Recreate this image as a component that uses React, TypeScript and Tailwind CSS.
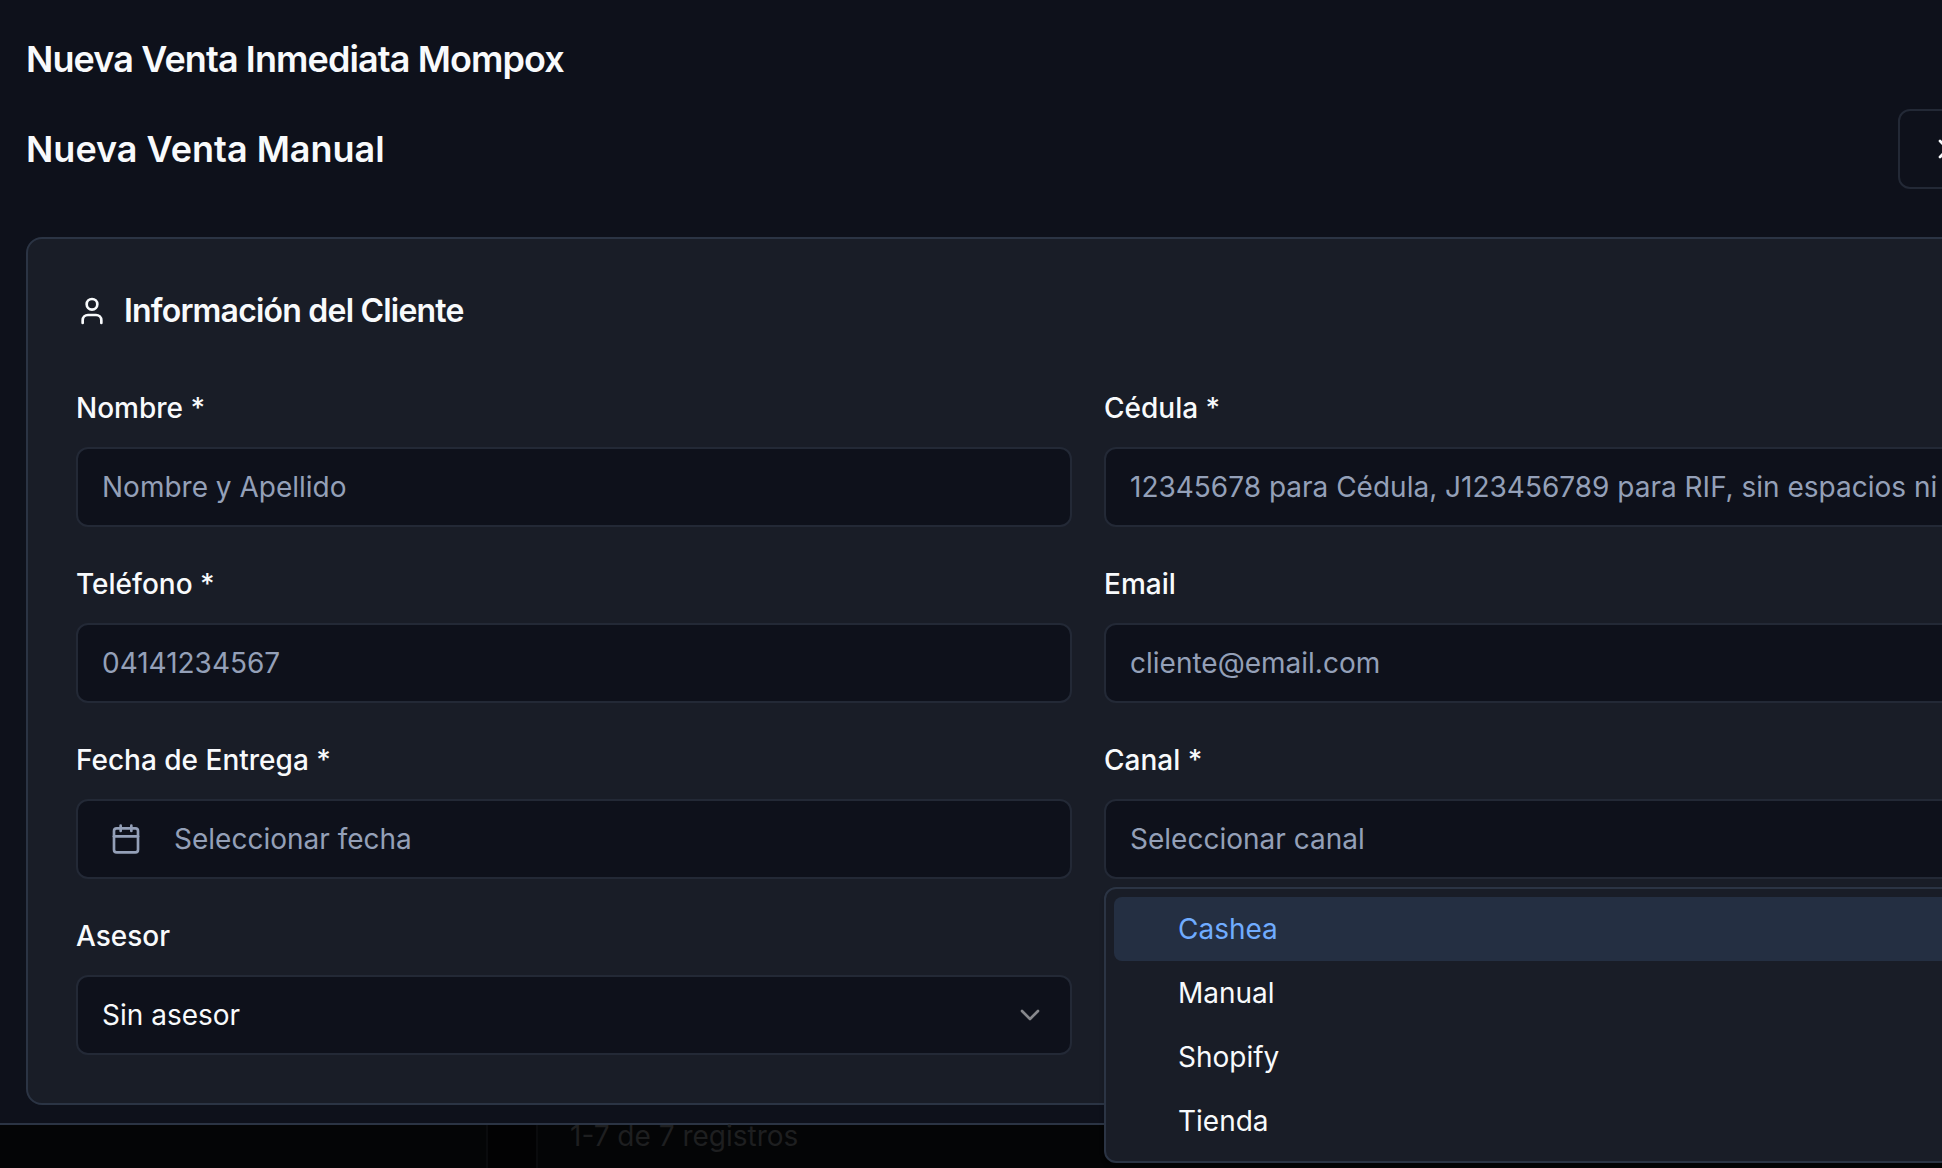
import type { ReactNode } from "react";
import { Calendar, ChevronDown, User, X } from "lucide-react";

const control =
  "h-20 w-full rounded-xl border-2 border-[#232936] bg-[#0e111b] px-6 text-[28px] outline-none placeholder:text-[#94a0b8] placeholder:opacity-100";

const channels = ["Cashea", "Manual", "Shopify", "Tienda"];

function Field({ id, label, children }: { id: string; label: string; children: ReactNode }) {
  return (
    <div className="min-w-0">
      <label htmlFor={id} className="mb-3.5 block text-[28px] leading-[50px] font-medium">
        {label}
      </label>
      {children}
    </div>
  );
}

function ChannelMenu() {
  return (
    <ul
      role="listbox"
      aria-label="Canal"
      className="absolute inset-x-0 top-full z-10 mt-2 rounded-xl border-2 border-[#2b3444] bg-[#191d27] p-2 shadow-md"
    >
      {channels.map((name, i) => (
        <li
          key={name}
          role="option"
          aria-selected={i === 0}
          className={
            i === 0
              ? "rounded-lg bg-[#242f42] pl-16 text-[28px] leading-[64px] text-[#70acff]"
              : "rounded-lg pl-16 text-[28px] leading-[64px]"
          }
        >
          {name}
        </li>
      ))}
    </ul>
  );
}

export default function App() {
  return (
    <div className="flex h-screen flex-col overflow-hidden bg-[#020203] font-['Inter',sans-serif] text-[#f8fafc]">
      <main className="border-b-2 border-[#2b3444] bg-[#0e111b] pt-[41px] pb-[18px] pl-[26px]">
        {/* The dialog content runs past the right edge of the window. */}
        <div className="w-[calc(100%+208px)]">
          <h1 className="text-4xl leading-9 font-semibold tracking-tight">Nueva Venta Inmediata Mompox</h1>

          <div className="mt-8 flex items-center justify-between">
            <h2 className="text-4xl font-semibold">Nueva Venta Manual</h2>
            <button
              type="button"
              aria-label="Cerrar"
              className="flex h-20 w-[252px] items-center rounded-xl border-2 border-[#232936] px-8"
            >
              <X size={32} />
            </button>
          </div>

          <section className="mt-12 rounded-2xl border-2 border-[#2b3444] bg-[#191d27] p-12">
            <h3 className="mb-12 flex items-center gap-4 text-[32px] leading-[48px] font-semibold tracking-tight">
              <User size={32} />
              Información del Cliente
            </h3>

            <form className="grid grid-cols-2 gap-8">
              <Field id="nombre" label="Nombre *">
                <input id="nombre" type="text" placeholder="Nombre y Apellido" className={control} />
              </Field>
              <Field id="cedula" label="Cédula *">
                <input
                  id="cedula"
                  type="text"
                  placeholder="12345678 para Cédula, J123456789 para RIF, sin espacios ni"
                  className={control}
                />
              </Field>
              <Field id="telefono" label="Teléfono *">
                <input id="telefono" type="tel" placeholder="04141234567" className={control} />
              </Field>
              <Field id="email" label="Email">
                <input id="email" type="email" placeholder="cliente@email.com" className={control} />
              </Field>
              <Field id="fecha" label="Fecha de Entrega *">
                <button
                  id="fecha"
                  type="button"
                  className="flex h-20 w-full items-center gap-8 rounded-xl border-2 border-[#232936] bg-[#0e111b] px-8 text-[28px] text-[#94a0b8]"
                >
                  <Calendar size={32} />
                  Seleccionar fecha
                </button>
              </Field>
              <Field id="canal" label="Canal *">
                <div className="relative">
                  <select id="canal" defaultValue="" className={`${control} appearance-none text-[#94a0b8]`}>
                    <option value="">Seleccionar canal</option>
                    {channels.map((name) => (
                      <option key={name}>{name}</option>
                    ))}
                  </select>
                  <ChannelMenu />
                </div>
              </Field>
              <Field id="asesor" label="Asesor">
                <div className="relative">
                  <select id="asesor" className={`${control} appearance-none`}>
                    <option>Sin asesor</option>
                  </select>
                  <ChevronDown
                    size={32}
                    className="pointer-events-none absolute inset-y-0 right-[26px] my-auto text-white opacity-50"
                  />
                </div>
              </Field>
            </form>
          </section>
        </div>
      </main>

      <div className="flex flex-1 gap-12">
        <aside className="w-[488px] border-r-2 border-[#0a0b0d] bg-[#040506]" />
        <div className="flex-1 border-l-2 border-[#0a0b0d] bg-[#040506] pl-8">
          <p className="text-[28px] leading-[22px] text-[#1e1f20]">1-7 de 7 registros</p>
        </div>
      </div>
    </div>
  );
}
